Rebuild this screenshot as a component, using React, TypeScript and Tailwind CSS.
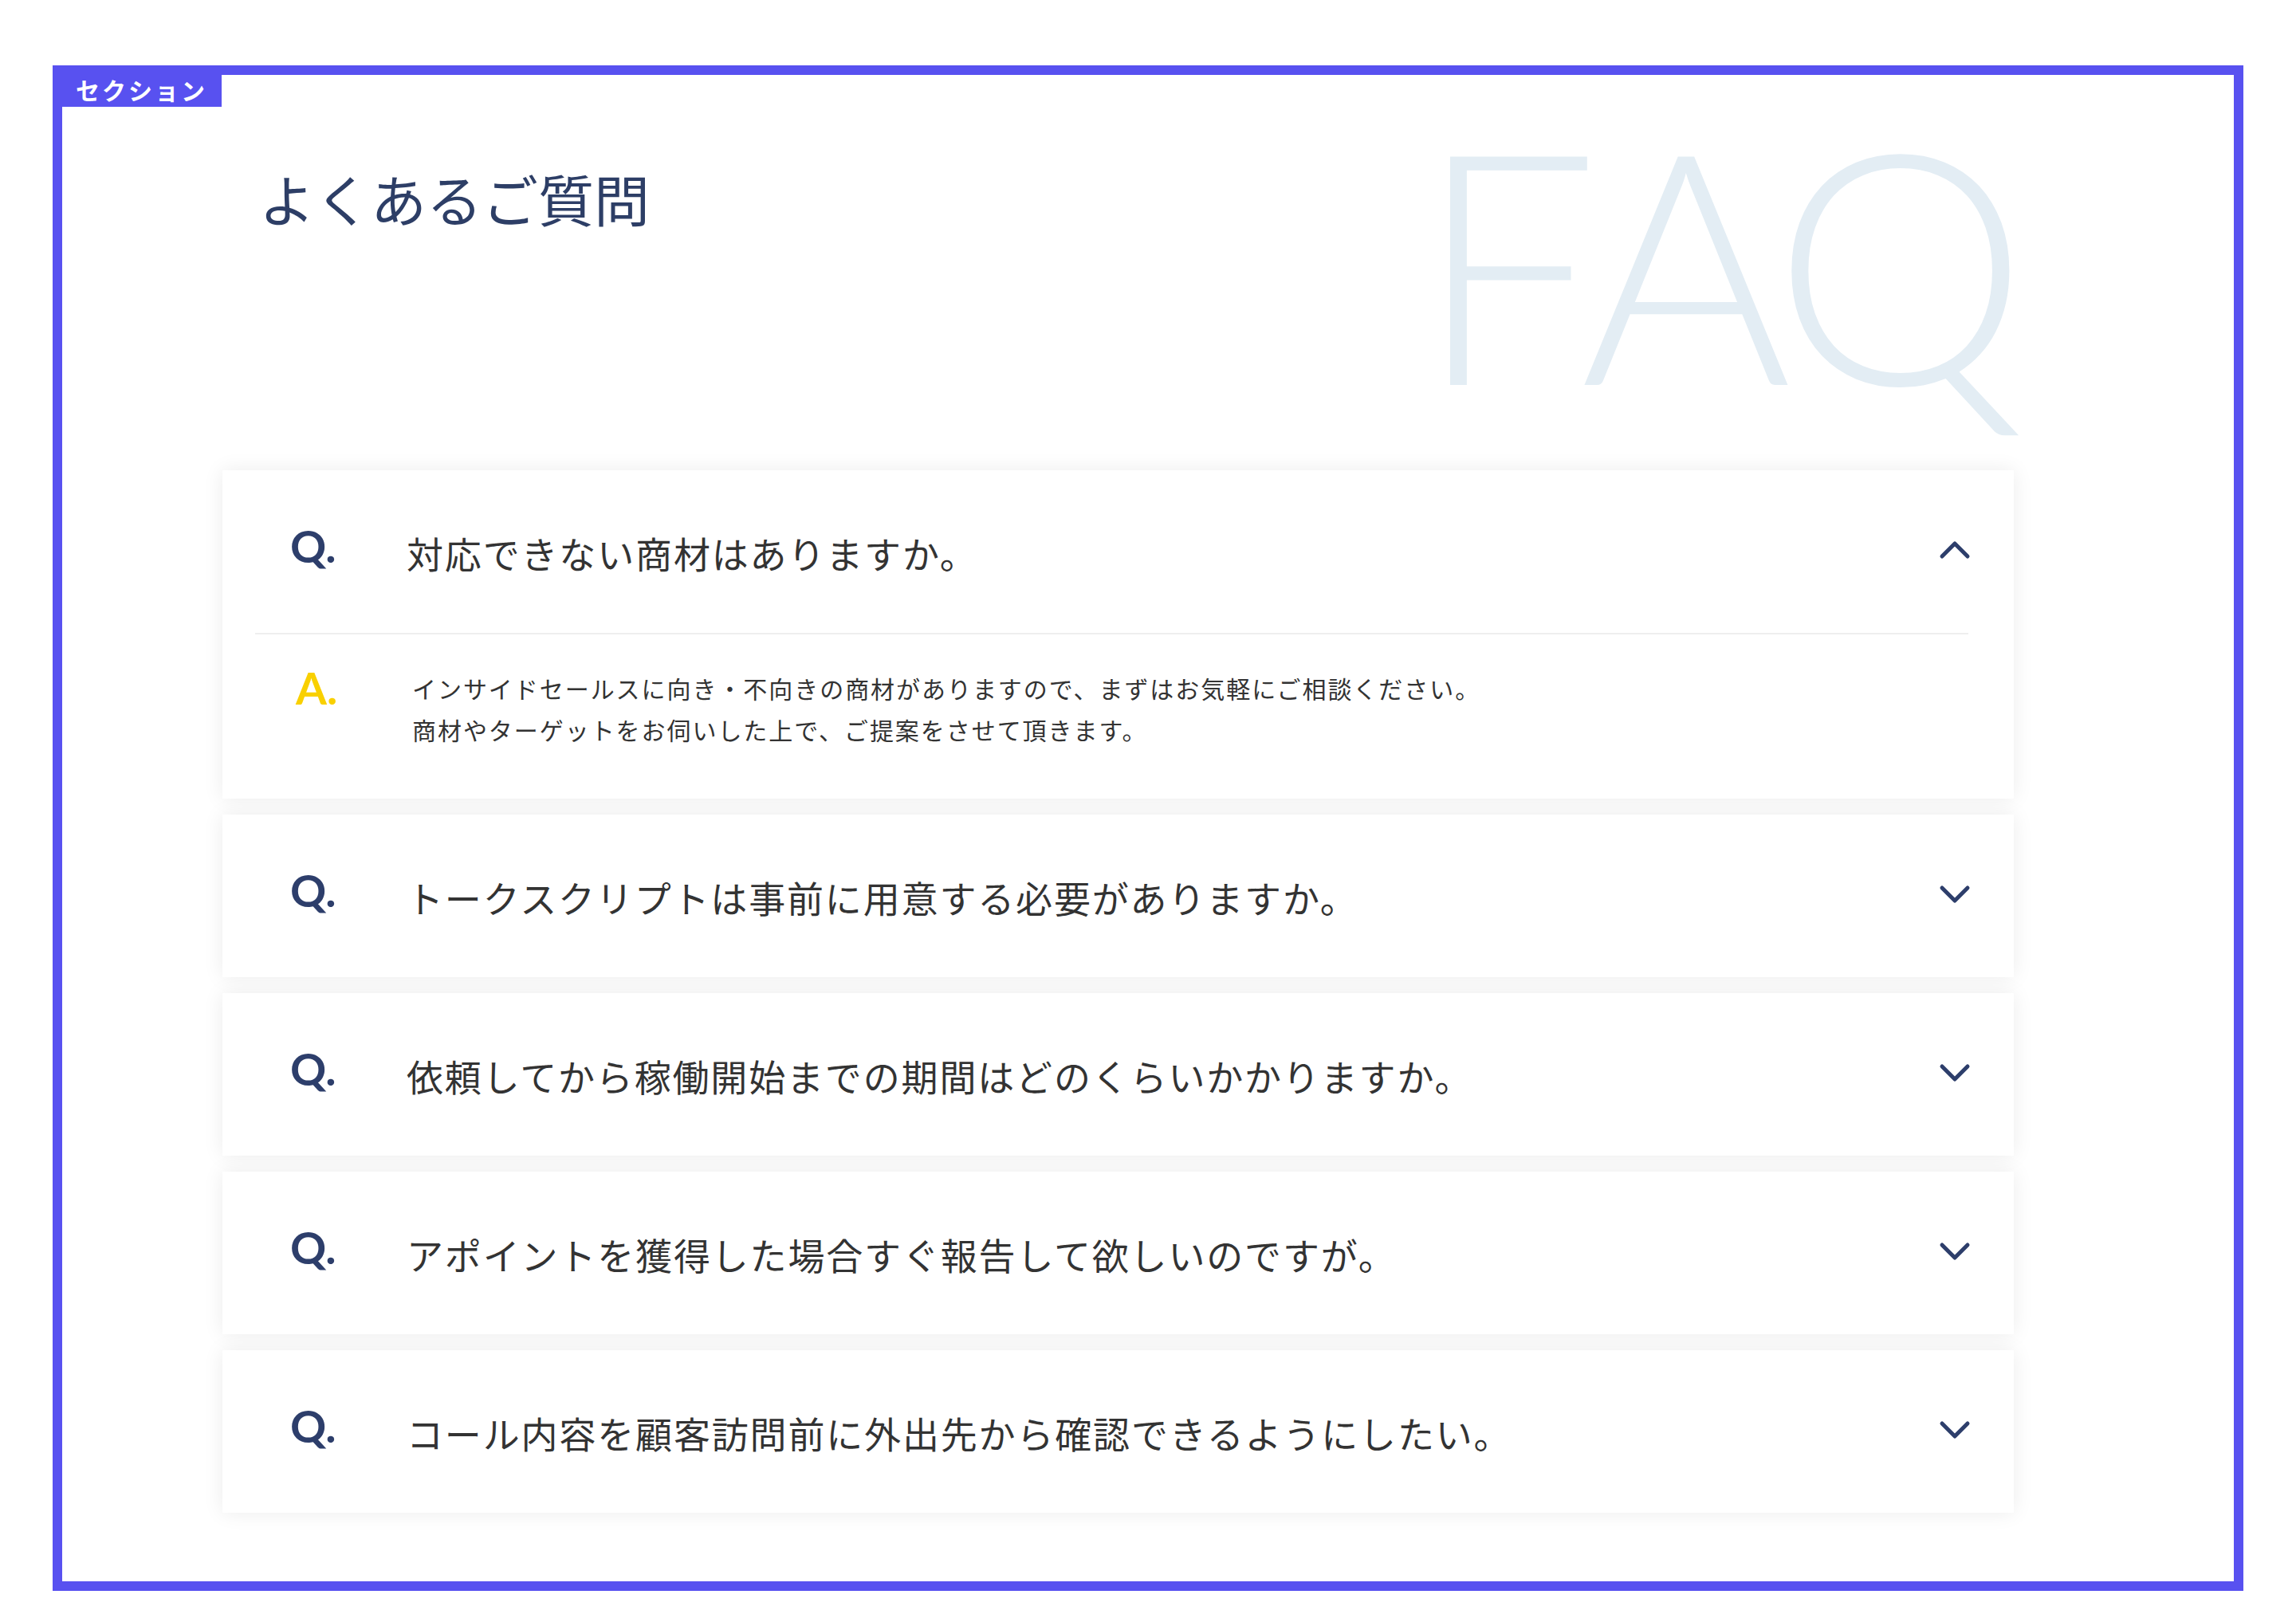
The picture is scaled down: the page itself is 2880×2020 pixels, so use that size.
import React from "react";

const faqs = [
  {
    q: "対応できない商材はありますか。",
    a: [
      "インサイドセールスに向き・不向きの商材がありますので、まずはお気軽にご相談ください。",
      "商材やターゲットをお伺いした上で、ご提案をさせて頂きます。",
    ],
  },
  { q: "トークスクリプトは事前に用意する必要がありますか。" },
  { q: "依頼してから稼働開始までの期間はどのくらいかかりますか。" },
  { q: "アポイントを獲得した場合すぐ報告して欲しいのですが。" },
  { q: "コール内容を顧客訪問前に外出先から確認できるようにしたい。" },
];

const jp = "font-['Noto_Sans_CJK_JP','Noto_Sans',sans-serif]";

const Chevron = ({ up }: { up?: boolean }) => (
  <svg width="40" height="24" viewBox="0 0 40 24" fill="none" className="mb-[4px] shrink-0">
    <path
      d={up ? "M4 20 L20 4 L36 20" : "M4 4 L20 20 L36 4"}
      stroke="#2d3e6b"
      strokeWidth="5"
      strokeLinecap="round"
      strokeLinejoin="round"
    />
  </svg>
);

const FaqCard = ({ q, a }: { q: string; a?: string[] }) => {
  return (
    <div className="bg-white shadow-[0_0_24px_rgba(0,0,0,0.08)]">
      <div className="flex h-[204px] items-center pl-[85px] pr-[54px]">
        <span className="mb-[14px] w-[146px] shrink-0 font-['Lato',sans-serif] text-[56px] font-bold leading-[56px] text-[#2d3e6b]">
          Q.
        </span>
        <p className={`${jp} mt-[2px] flex-1 text-[46px] leading-[60px] tracking-[0.04em] text-[#333333]`}>{q}</p>
        <Chevron up={!!a} />
      </div>
      {a && (
        <>
          <div className="ml-[41px] mr-[57px] border-t-2 border-[#eeeeee]" />
          <div className="flex items-start pb-[61px] pl-[92px] pt-[41px]">
            <span className="-mt-[2px] w-[146px] shrink-0 font-['Lato',sans-serif] text-[56px] font-bold leading-[56px] text-[#f9d000]">
              A.
            </span>
            <div className={`${jp} text-[30px] leading-[52px] tracking-[0.065em] text-[#333333]`}>
              {a.map((line) => (
                <p key={line}>{line}</p>
              ))}
            </div>
          </div>
        </>
      )}
    </div>
  );
};

export default function App() {
  return (
    <div className="h-[2020px] w-[2880px] bg-white pl-[66px] pt-[82px]">
      <div className="relative h-[1914px] w-[2748px] border-[12px] border-[#5851f0]">
        <div
          className={`${jp} absolute left-0 top-0 flex h-[40px] w-[200px] items-center bg-[#5851f0] pb-[3px] pl-[17px] text-[30px] font-bold tracking-[0.1em] text-white`}
        >
          セクション
        </div>

        {/* big watermark behind the heading */}
        <div className="pointer-events-none absolute right-[268px] top-[30px] select-none whitespace-nowrap font-['Lato',sans-serif] text-[405px] font-light leading-[405px] tracking-[-0.025em] text-[#e3edf4]">
          <span>F</span>
          <span className="-ml-[13px]">A</span>
          <span className="-ml-[14px]">Q</span>
        </div>

        <div className="relative pl-[201px] pt-[120px]">
          <h2 className={`${jp} ml-[46px] text-[70px] font-normal leading-[70px] text-[#2d3e66]`}>よくあるご質問</h2>
          <div className="mt-[306px] flex w-[2247px] flex-col gap-[20px]">
            {faqs.map((f) => (
              <FaqCard key={f.q} q={f.q} a={f.a} />
            ))}
          </div>
        </div>
      </div>
    </div>
  );
}
